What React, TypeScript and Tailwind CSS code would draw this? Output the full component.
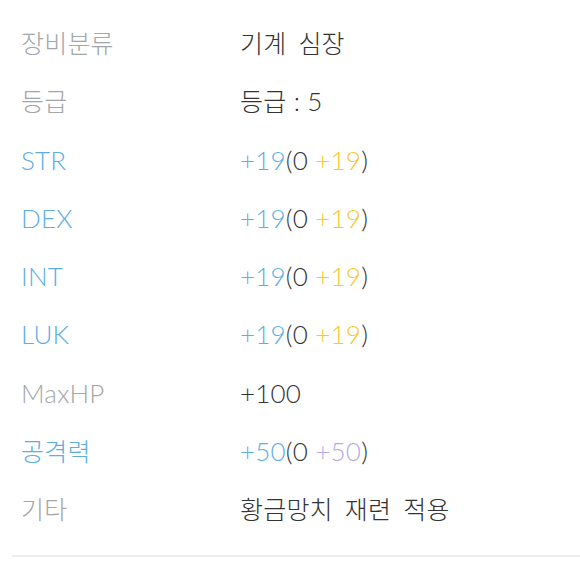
const Ko = ({ children }: { children: React.ReactNode }) => (
  <span className="text-[25px] [word-spacing:5px]">{children}</span>
);

const rows: { label: React.ReactNode; tone: "grey" | "blue"; value: React.ReactNode }[] = [
  { label: <Ko>장비분류</Ko>, tone: "grey", value: <Ko>기계 심장</Ko> },
  {
    label: <Ko>등급</Ko>,
    tone: "grey",
    value: (
      <>
        <Ko>등급</Ko> : 5
      </>
    ),
  },
  ...["STR", "DEX", "INT", "LUK"].map((s) => ({
    label: s,
    tone: "blue" as const,
    value: (
      <>
        <span className="text-[#5eaee3]">+19</span>(0{" "}
        <span className="text-[#f6c82a]">+19</span>)
      </>
    ),
  })),
  { label: "MaxHP", tone: "grey", value: "+100" },
  {
    label: <Ko>공격력</Ko>,
    tone: "blue",
    value: (
      <>
        <span className="text-[#5eaee3]">+50</span>(0{" "}
        <span className="text-[#b5aae6]">+50</span>)
      </>
    ),
  },
  { label: <Ko>기타</Ko>, tone: "grey", value: <Ko>황금망치 재련 적용</Ko> },
];

export default function App() {
  return (
    <div className="w-[580px] h-[562px] bg-white overflow-hidden font-['Lato','Noto_Sans_CJK_KR',sans-serif] font-light text-[26px] tracking-[0.2px] leading-none">
      <div className="pt-[14px] flex flex-col">
        {rows.map((r, i) => (
          <div key={i} className="flex items-center h-[58.25px]">
            <div
              className={
                "w-[240px] pl-[21px] " +
                (r.tone === "blue" ? "text-[#5eaee3]" : "text-[#a3a6aa]")
              }
            >
              {r.label}
            </div>
            <div className="text-[#333333]">{r.value}</div>
          </div>
        ))}
      </div>
      <div className="mt-[17px] ml-[12px] h-[2px] bg-[#ececec]" />
    </div>
  );
}
